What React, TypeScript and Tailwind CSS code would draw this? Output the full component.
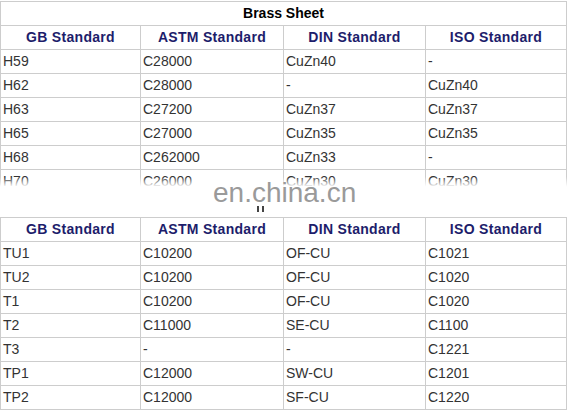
const brass = [
  ["H59", "C28000", "CuZn40", "-"],
  ["H62", "C28000", "-", "CuZn40"],
  ["H63", "C27200", "CuZn37", "CuZn37"],
  ["H65", "C27000", "CuZn35", "CuZn35"],
  ["H68", "C262000", "CuZn33", "-"],
  ["H70", "C26000", "CuZn30", "CuZn30"],
];

const copper = [
  ["TU1", "C10200", "OF-CU", "C1021"],
  ["TU2", "C10200", "OF-CU", "C1020"],
  ["T1", "C10200", "OF-CU", "C1020"],
  ["T2", "C11000", "SE-CU", "C1100"],
  ["T3", "-", "-", "C1221"],
  ["TP1", "C12000", "SW-CU", "C1201"],
  ["TP2", "C12000", "SF-CU", "C1220"],
];

const heads = ["GB Standard", "ASTM Standard", "DIN Standard", "ISO Standard"];

function Cols() {
  return (
    <colgroup>
      <col className="w-[140px]" />
      <col className="w-[143px]" />
      <col className="w-[142px]" />
      <col className="w-[141px]" />
    </colgroup>
  );
}

function HeadRow() {
  return (
    <tr className="h-[24px]">
      {heads.map((h) => (
        <td key={h} className="border border-[#cdcdcd] text-center font-bold text-[14px] tracking-[0.3px] text-[#1d1d6b] p-0">
          {h}
        </td>
      ))}
    </tr>
  );
}

function DataRow({ row }: { row: string[] }) {
  return (
    <tr className="h-[24px]">
      {row.map((c, i) => (
        <td key={i} className="border border-[#cdcdcd] pl-[2px] py-0 text-[14px] text-[#333]">
          {c}
        </td>
      ))}
    </tr>
  );
}

export default function App() {
  return (
    <div
      className="relative w-[568px] h-[410px] overflow-hidden bg-white"
      style={{ fontFamily: '"Liberation Sans", Arial, sans-serif' }}
    >
      <table className="mt-px table-fixed border-collapse w-[567px]">
        <Cols />
        <tbody>
          <tr className="h-[24px]">
            <td colSpan={4} className="border border-[#cdcdcd] text-center font-bold text-[14px] text-black p-0">
              Brass Sheet
            </td>
          </tr>
          <HeadRow />
          {brass.map((r) => (
            <DataRow key={r[0]} row={r} />
          ))}
        </tbody>
      </table>

      <table className="mt-[23px] table-fixed border-collapse w-[567px]">
        <Cols />
        <tbody>
          <HeadRow />
          {copper.map((r) => (
            <DataRow key={r[0]} row={r} />
          ))}
        </tbody>
      </table>

      {/* blurred watermark band */}
      <div className="absolute left-0 right-0 top-[177px] h-[39px] bg-gradient-to-b from-white/0 via-white via-[25%] to-white" />
      <div className="absolute left-[213px] top-[179px] text-[28px] leading-none text-[#9a9a9a]">
        en.china.cn
      </div>
      <div className="absolute left-[257px] top-[206px] flex gap-[3px]">
        <div className="w-[2px] h-[6px] bg-[#444]" />
        <div className="w-[2px] h-[6px] bg-[#444]" />
      </div>
    </div>
  );
}
